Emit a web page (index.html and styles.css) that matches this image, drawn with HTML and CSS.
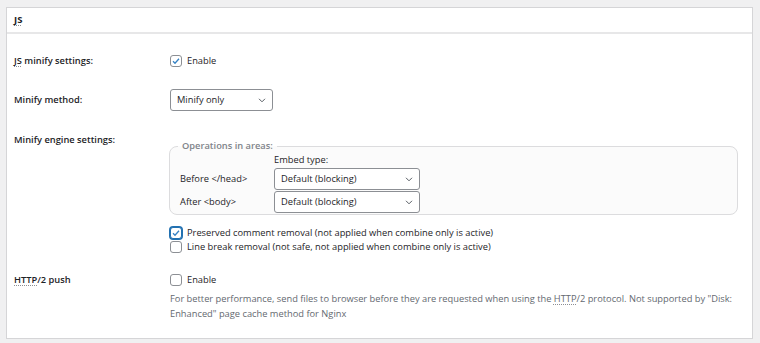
FILE: index.html
```html
<!DOCTYPE html>
<html lang="en">
<head>
    <meta charset="UTF-8">
    <title>Minify - JS</title>
    <link rel="stylesheet" href="styles.css">
</head>
<body>

<div class="postbox">
    <!-- Cabeçalho -->
    <div class="postbox-header">
        <h3><abbr title="JavaScript">JS</abbr></h3>
    </div>

    <div class="inside">

        <div class="row">
            <div class="label"><abbr title="JavaScript">JS</abbr> minify settings:</div>
            <div class="field">
                <label class="check"><input type="checkbox" checked> Enable</label>
            </div>
        </div>

        <div class="row row-method">
            <div class="label label-select">Minify method:</div>
            <div class="field">
                <div class="select select-method">Minify only</div>
            </div>
        </div>

        <div class="row">
            <div class="label">Minify engine settings:</div>
            <div class="field">
                <fieldset class="areas">
                    <legend>Operations in areas:</legend>
                    <div class="areas-grid">
                        <span></span>
                        <span class="embed">Embed type:</span>
                        <span class="area-name">Before &lt;/head&gt;</span>
                        <div class="select select-embed">Default (blocking)</div>
                        <span class="area-name">After &lt;body&gt;</span>
                        <div class="select select-embed">Default (blocking)</div>
                    </div>
                </fieldset>

                <div class="options">
                    <label class="check"><input type="checkbox" class="focus" checked> Preserved comment removal (not applied when combine only is active)</label>
                    <label class="check"><input type="checkbox"> Line break removal (not safe, not applied when combine only is active)</label>
                </div>
            </div>
        </div>

        <div class="row row-push">
            <div class="label"><abbr title="Hypertext Transfer Protocol">HTTP</abbr>/2 push</div>
            <div class="field">
                <label class="check"><input type="checkbox"> Enable</label>
                <p class="description">For better performance, send files to browser before they are requested when using the <abbr title="Hypertext Transfer Protocol">HTTP</abbr>/2 protocol. Not supported by "Disk:<br>Enhanced" page cache method for Nginx</p>
            </div>
        </div>

    </div>
</div>

</body>
</html>
```

FILE: styles.css
```css
body {
    font-family: "Open Sans", "Noto Sans", Arial, sans-serif;
    font-size: 9.3px;
    line-height: 14px;
    color: #1d2327;
    margin: 0;
    background-color: #f0f0f1;
}
abbr {
    text-decoration: underline dotted #8c8f94;
    text-underline-offset: 2px;
}
.postbox {
    margin: 7px 7px 0 6px;
    background-color: white;
    border: 1px solid #d5d5d7;
}
.postbox-header {
    height: 24px;
    padding-left: 7px;
    border-bottom: 2px solid #e7e7e8;
}
.postbox-header h3 {
    margin: 0;
    font-size: 9.5px;
    font-weight: 700;
    line-height: 24px;
}
.inside {
    display: flex;
    flex-direction: column;
    gap: 22px;
    padding: 20px 0 17px 7px;
}
.row {
    display: grid;
    grid-template-columns: 156px 1fr;
}
.row-method {
    margin-top: -1px;
}
.row-push {
    margin-top: -3px;
}
.label {
    font-weight: 600;
}
.label-select {
    line-height: 22px;
}
.check {
    display: flex;
    align-items: center;
    gap: 5px;
    height: 14px;
}
.check input {
    appearance: none;
    width: 12px;
    height: 12px;
    margin: 0;
    border: 1px solid #8c8f94;
    border-radius: 3px;
    background: white center / 10px 10px no-repeat;
}
.check input:checked {
    background-image: url("data:image/svg+xml;utf8,<svg xmlns='http://www.w3.org/2000/svg' viewBox='0 0 20 20'><path d='M4 10.5l4 4 8-9' fill='none' stroke='%233582c4' stroke-width='2.6'/></svg>");
}
.check input.focus {
    border-color: #2271b1;
    box-shadow: 0 0 0 1px #2271b1;
}
.select {
    box-sizing: border-box;
    height: 22px;
    line-height: 20px;
    padding-left: 6px;
    border: 1px solid #8c8f94;
    border-radius: 3px;
    background: white url("data:image/svg+xml;utf8,<svg xmlns='http://www.w3.org/2000/svg' viewBox='0 0 20 20'><path d='M5 8l5 5 5-5' fill='none' stroke='%2350575e' stroke-width='1.6'/></svg>") right 4px center / 12px 12px no-repeat;
}
.select-method {
    width: 103px;
}
.select-embed {
    width: 146px;
}
.areas {
    margin: 6px 14px 0 -1px;
    padding: 0 10px 1px;
    border: 1px solid #dcdcde;
    border-radius: 8px;
    background-color: #fbfbfb;
}
.areas legend {
    margin-left: -2px;
    padding: 0 4px;
    font-weight: 600;
    color: #80848a;
}
.areas-grid {
    display: grid;
    grid-template-columns: 94px 146px;
    row-gap: 1px;
    align-items: center;
}
.embed {
    line-height: 14px;
}
.options {
    margin-top: 11px;
}
.description {
    margin: 4px 0 0;
    line-height: 15px;
    color: #646970;
}
```
